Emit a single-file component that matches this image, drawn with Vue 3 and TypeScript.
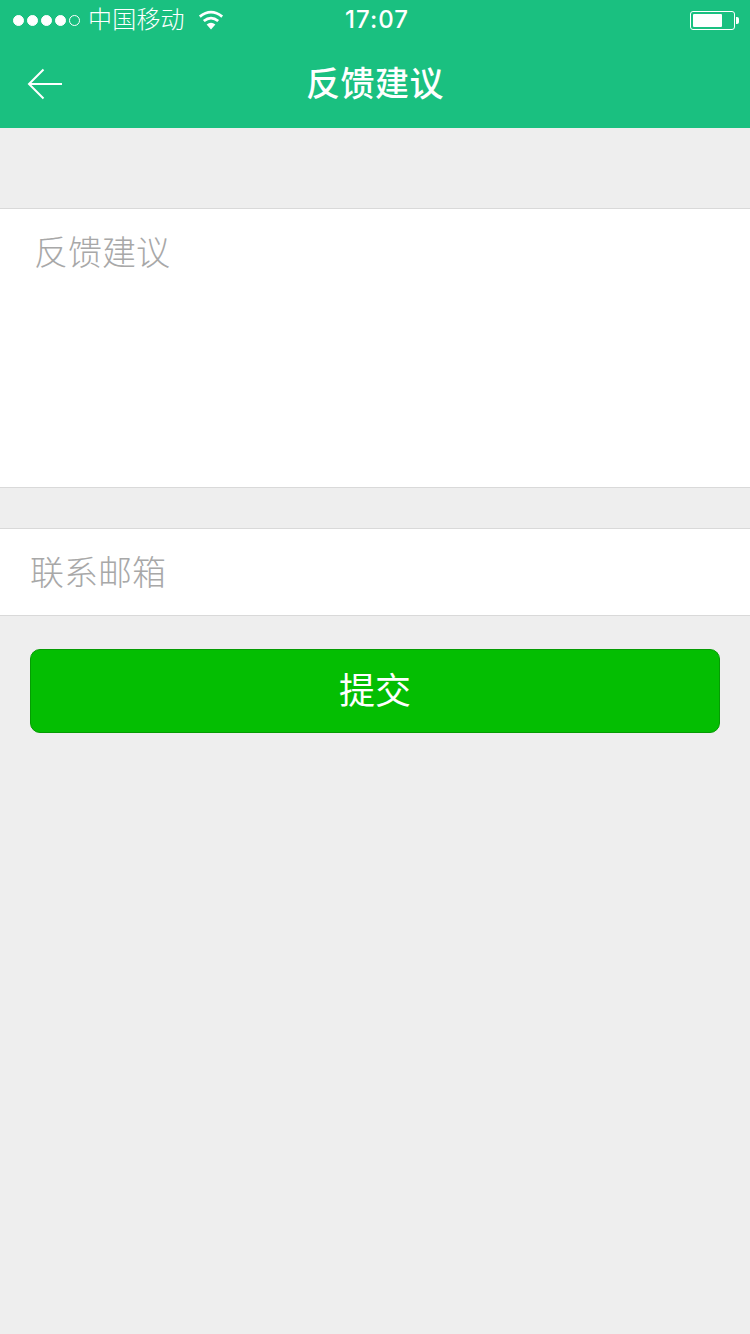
<script setup lang="ts">
const dots: boolean[] = [true, true, true, true, false]
</script>

<template>
  <div class="page">
    <header class="header">
      <div class="status">
        <div class="status-left">
          <span class="dots">
            <i v-for="(d, i) in dots" :key="i" class="dot" :class="{ on: d }"></i>
          </span>
          <span class="carrier">中国移动</span>
          <svg class="wifi" width="26" height="20" viewBox="0 0 26 20">
            <path d="M13 19.5 L8.6 14.6 Q13 11 17.4 14.6 Z" fill="#fff" />
            <path d="M5.8 11 Q13 5.2 20.2 11" fill="none" stroke="#fff" stroke-width="2.8" />
            <path d="M1.8 6.6 Q13 -2.4 24.2 6.6" fill="none" stroke="#fff" stroke-width="2.8" />
          </svg>
        </div>
        <span class="time">17:07</span>
        <div class="battery">
          <span class="battery-body"><span class="battery-fill"></span></span>
          <span class="battery-cap"></span>
        </div>
      </div>
      <div class="nav">
        <svg class="back" width="36" height="32" viewBox="0 0 36 32">
          <path d="M35 16 H2 M16.5 1.5 L2 16 L16.5 30.5" fill="none" stroke="#fff" stroke-width="2" />
        </svg>
        <h1 class="title">反馈建议</h1>
      </div>
    </header>

    <section class="field area"><span class="hint">反馈建议</span></section>
    <section class="field mail"><span class="hint">联系邮箱</span></section>
    <div class="actions"><button class="submit" type="button">提交</button></div>
  </div>
</template>

<style scoped>
.page {
  width: 750px;
  height: 1334px;
  background: #eeeeee;
  font-family: "Liberation Sans", "Noto Sans CJK SC", sans-serif;
  overflow: hidden;
}
.header {
  height: 128px;
  background: #1ac080;
  color: #fff;
  display: flex;
  flex-direction: column;
}
.status {
  height: 40px;
  position: relative;
  display: flex;
  align-items: center;
  justify-content: space-between;
  padding: 0 13px;
}
.status-left {
  display: flex;
  align-items: center;
}
.dots {
  display: flex;
  gap: 3px;
}
.dot {
  width: 11px;
  height: 11px;
  border-radius: 50%;
  border: 1px solid #fff;
  box-sizing: border-box;
}
.dot.on {
  background: #fff;
}
.carrier {
  margin-left: 8px;
  font-size: 24px;
  line-height: 44px;
  font-weight: 300;
  letter-spacing: 0.2px;
}
.wifi {
  margin-left: 13px;
}
.time {
  position: absolute;
  left: 4px;
  right: 0;
  text-align: center;
  font-family: Inter, sans-serif;
  font-size: 24px;
  font-weight: 500;
  letter-spacing: 1px;
  line-height: 42px;
}
.battery {
  display: flex;
  align-items: center;
  margin-right: -2px;
}
.battery-body {
  width: 45px;
  height: 19px;
  box-sizing: border-box;
  border: 1px solid #fff;
  border-radius: 3px;
  padding: 2px;
  display: flex;
}
.battery-fill {
  width: 29px;
  background: #fff;
  border-radius: 1px;
}
.battery-cap {
  width: 3px;
  height: 7px;
  margin-left: 1px;
  background: #fff;
  border-radius: 0 2px 2px 0;
}
.nav {
  height: 88px;
  position: relative;
  display: flex;
  align-items: center;
  justify-content: center;
}
.back {
  position: absolute;
  left: 27px;
  top: 28px;
}
.title {
  margin: 0;
  font-size: 34px;
  font-weight: 500;
  letter-spacing: 0.5px;
  line-height: 88px;
}
.field {
  background: #fff;
  border-top: 1px solid #d9d9d9;
  border-bottom: 1px solid #d9d9d9;
  box-sizing: border-box;
}
.hint {
  color: #a8a8a8;
  font-size: 34px;
  font-weight: 300;
}
.area {
  margin-top: 80px;
  height: 280px;
  padding: 23px 0 0 34px;
  line-height: 42px;
}
.mail {
  margin-top: 40px;
  height: 88px;
  padding-left: 30px;
  line-height: 88px;
}
.actions {
  padding: 33px 30px 0;
}
.submit {
  display: block;
  width: 100%;
  height: 84px;
  background: #04be02;
  border: 1px solid #059c03;
  border-radius: 10px;
  color: #fff;
  font-family: inherit;
  font-size: 36px;
  line-height: 80px;
  padding: 2px 0 0;
}
</style>
